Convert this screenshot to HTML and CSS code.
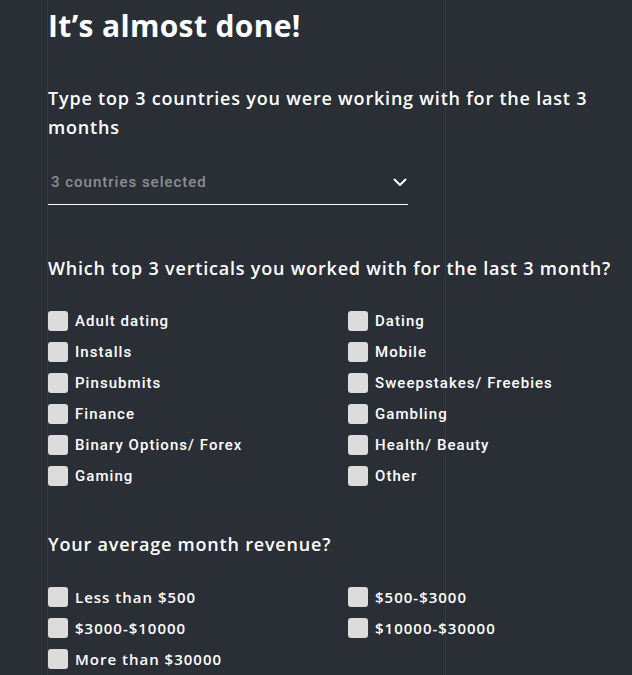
FILE: index.html
```html
<!DOCTYPE html>
<html lang="en">
  <head>
    <meta charset="UTF-8" />
    <meta name="viewport" content="width=device-width, initial-scale=1.0" />
    <title>Survey</title>
    <link rel="stylesheet" href="styles.css">
  </head>
  <body>
    <div class="page">
      <h1 class="title">It’s almost done!</h1>

      <!-- Countries -->
      <p class="question q-countries">Type top 3 countries you were working with for the last 3 months</p>
      <div class="select">
        <span class="select-text">3 countries selected</span>
        <svg class="chevron" width="14" height="8" viewBox="0 0 14 8">
          <path d="M1 1 L7 7 L13 1" fill="none" stroke="#fff" stroke-width="2" />
        </svg>
      </div>

      <!-- Verticals -->
      <p class="question q-verticals">Which top 3 verticals you worked with for the last 3 month?</p>
      <div class="options">
        <label class="option"><span class="box"></span>Adult dating</label>
        <label class="option"><span class="box"></span>Dating</label>
        <label class="option"><span class="box"></span>Installs</label>
        <label class="option"><span class="box"></span>Mobile</label>
        <label class="option"><span class="box"></span>Pinsubmits</label>
        <label class="option"><span class="box"></span>Sweepstakes/ Freebies</label>
        <label class="option"><span class="box"></span>Finance</label>
        <label class="option"><span class="box"></span>Gambling</label>
        <label class="option"><span class="box"></span>Binary Options/ Forex</label>
        <label class="option"><span class="box"></span>Health/ Beauty</label>
        <label class="option"><span class="box"></span>Gaming</label>
        <label class="option"><span class="box"></span>Other</label>
      </div>

      <!-- Revenue -->
      <p class="question q-revenue">Your average month revenue?</p>
      <div class="options money">
        <label class="option"><span class="box"></span>Less than $500</label>
        <label class="option"><span class="box"></span>$500-$3000</label>
        <label class="option"><span class="box"></span>$3000-$10000</label>
        <label class="option"><span class="box"></span>$10000-$30000</label>
        <label class="option"><span class="box"></span>More than $30000</label>
      </div>
    </div>
  </body>
</html>
```

FILE: styles.css
```css
/* Global */
body {
  margin: 0;
  background-color: #2a2e35;
  color: #fff;
  font-family: "Open Sans", "Lato", sans-serif;
}

.page {
  margin-left: 47px;
  width: 397px;
  min-height: 675px;
  border-left: 1px solid #363b43;
  border-right: 1px solid #363b43;
  padding-top: 8px;
}

.title {
  margin: 0;
  font-size: 30px;
  line-height: 36px;
  font-weight: 700;
  letter-spacing: 0.35px;
  white-space: nowrap;
}

.question {
  margin: 40px 0 0;
  font-size: 18px;
  line-height: 29px;
  font-weight: 600;
  letter-spacing: 0.8px;
  white-space: nowrap;
}

.q-countries {
  width: 560px;
  white-space: normal;
}

/* Select */
.select {
  margin-top: 30px;
  width: 360px;
  display: flex;
  justify-content: space-between;
  align-items: center;
  padding: 0 0 12px 0;
  border-bottom: 1px solid #fff;
  box-sizing: border-box;
}

.select-text {
  padding-left: 3px;
  font-family: "Roboto", sans-serif;
  font-weight: 500;
  font-size: 15px;
  line-height: 20px;
  letter-spacing: 1px;
  color: #8b8e93;
}

.chevron {
  margin-right: 1px;
}

.q-verticals {
  margin-top: 49px;
}

.q-revenue {
  margin-top: 44px;
}

/* Checkbox grid */
.options {
  margin-top: 28px;
  width: 600px;
  display: grid;
  grid-template-columns: 300px 300px;
  row-gap: 11px;
}

.option {
  display: flex;
  align-items: center;
  gap: 7px;
  height: 20px;
  font-family: "Roboto", sans-serif;
  font-weight: 500;
  font-size: 15px;
  letter-spacing: 1.05px;
  white-space: nowrap;
}

.money .option {
  font-family: "Open Sans", sans-serif;
  font-weight: 600;
  letter-spacing: 1px;
}

.box {
  width: 20px;
  height: 20px;
  border-radius: 3px;
  background-color: #dcdcdc;
  flex-shrink: 0;
}
```
